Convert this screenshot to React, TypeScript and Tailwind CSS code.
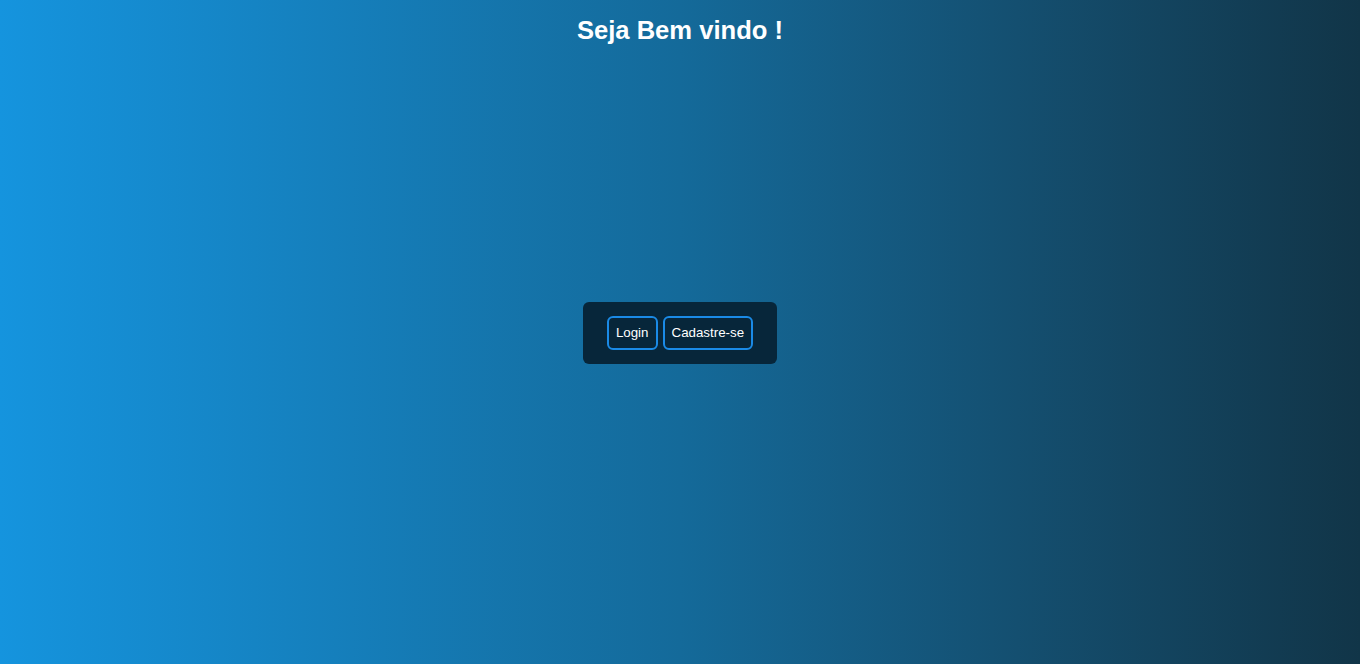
export default function App() {
  return (
    <div className="flex h-screen flex-col items-center bg-gradient-to-r from-[#1594de] via-[#146a9a] to-[#113548] font-['Liberation_Sans',Arial,sans-serif] text-white">
      <h1 className="mt-[15px] h-[30px] text-[25.6px] font-bold leading-[30px]">Seja Bem vindo !</h1>

      <div className="flex w-full flex-1 items-center justify-center pb-[44px]">
        <div className="flex gap-[5px] rounded-[6px] bg-[#07263a] px-[24px] py-[14px]">
          <button className="h-[34px] rounded-[6px] border-2 border-[#1a8ae6] px-[7px] text-[13.33px] text-white">
            Login
          </button>
          <button className="h-[34px] rounded-[6px] border-2 border-[#1a8ae6] px-[7px] text-[13.33px] text-white">
            Cadastre-se
          </button>
        </div>
      </div>
    </div>
  );
}
